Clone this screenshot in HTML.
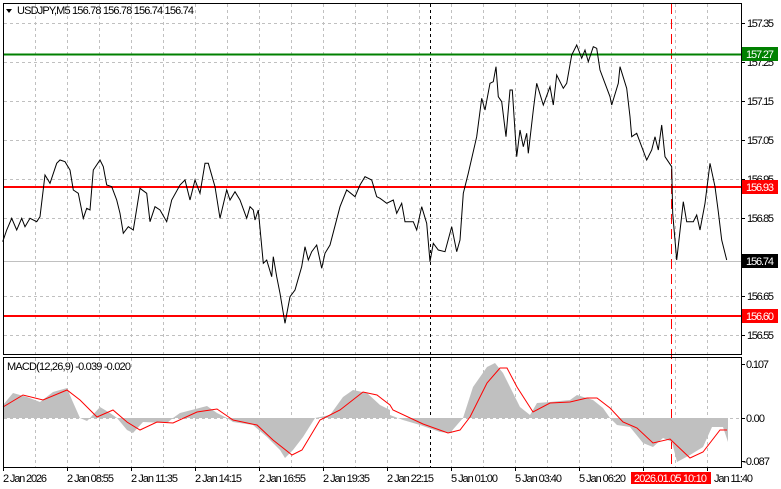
<!DOCTYPE html>
<html><head><style>
html,body{margin:0;padding:0;background:#fff;}
svg{display:block;}
text{font-family:"Liberation Sans","DejaVu Sans",sans-serif;font-size:11px;fill:#000;}
</style></head><body>
<svg width="781" height="489" viewBox="0 0 781 489" xmlns="http://www.w3.org/2000/svg">
<rect width="781" height="489" fill="#fff"/>
<g stroke="#c0c0c0" stroke-width="1" stroke-dasharray="3,3" shape-rendering="crispEdges">
<path d="M35.5 4V354M67.5 4V354M99.5 4V354M131.5 4V354M163.5 4V354M195.5 4V354M227.5 4V354M259.5 4V354M291.5 4V354M323.5 4V354M355.5 4V354M387.5 4V354M419.5 4V354M451.5 4V354M483.5 4V354M515.5 4V354M547.5 4V354M579.5 4V354M611.5 4V354M643.5 4V354M675.5 4V354M707.5 4V354"/>
<path d="M35.5 358V467M67.5 358V467M99.5 358V467M131.5 358V467M163.5 358V467M195.5 358V467M227.5 358V467M259.5 358V467M291.5 358V467M323.5 358V467M355.5 358V467M387.5 358V467M419.5 358V467M451.5 358V467M483.5 358V467M515.5 358V467M547.5 358V467M579.5 358V467M611.5 358V467M643.5 358V467M675.5 358V467M707.5 358V467"/>
<path d="M4 23.5H741M4 62.5H741M4 101.5H741M4 140.5H741M4 179.5H741M4 218.5H741M4 296.5H741M4 335.5H741"/>
<path d="M4 418.5H741"/>
</g>
<line x1="4" y1="261.5" x2="741" y2="261.5" stroke="#c0c0c0"/>
<line x1="430.5" y1="4" x2="430.5" y2="467" stroke="#000" stroke-dasharray="3,3"/>
<line x1="671.5" y1="4" x2="671.5" y2="467" stroke="#f00" stroke-dasharray="10,5"/>
<line x1="4" y1="54.5" x2="741" y2="54.5" stroke="#008000" stroke-width="2"/>
<line x1="4" y1="187" x2="741" y2="187" stroke="#f00" stroke-width="2"/>
<line x1="4" y1="316" x2="741" y2="316" stroke="#f00" stroke-width="2"/>
<polyline fill="none" stroke="#000" stroke-width="1" points="2.7,241.7 6.7,230 11.7,218.3 16.7,230 21.7,218.3 25,226.7 30,218.3 36.7,221.7 40,216.7 45,175 50,183.3 56.7,163.3 60,160 65,161.7 70,170 73.3,190 78.3,193.3 83.3,218.3 86.7,208.3 90,210 93.3,170 100,160 103.3,166.7 106.7,185 111.7,186.7 116.7,200 120,213.3 123.3,233.3 128.3,226.7 133.3,230 140,188.3 146.7,193.3 150,221.7 155,206.7 160,210 166.7,221.7 171.7,200 180,185 185,180 190,200 195,180 200,193.3 205,163.3 208.3,163.3 215,186.7 220,218.3 226.7,190 230,200 235,191.7 240,200 246.7,218.3 250,206.7 253.3,210 255,220 258.3,210 263.3,263.3 266.7,260 271.7,276.7 273.3,256.7 276.7,276.7 280,293.3 285,323.3 290,296.7 295,290 301.7,266.7 305,246.7 308.3,260 311.7,251.7 316.7,245 321.7,268.3 325,253.3 330,245 340,206.7 346.7,190 355,196.7 360,185 365,176.7 371.7,180 376.7,196.7 380,198.3 386.7,203.3 393.3,200 396.7,213.3 401.7,203.3 405,221.7 413.3,221.7 416.7,230 421.7,206.7 426.7,223.3 430,261.7 433.3,243.3 438.3,250 445,251.7 451.7,226.7 456.7,251.7 460,240 463.3,193.3 468.3,173.3 476.7,136.7 481.7,98.3 485,110 490,83.3 493.3,81.7 496,66.7 498.3,96.7 501.7,101.7 506,136.7 510,90 512.3,90 516.7,156.7 520,130 523.3,146.7 526.7,133.3 528.3,153.3 533.3,110 536.7,83.3 543.3,105 550,86.7 553.3,105 556.7,75 563.3,88.3 566.7,83.3 571.7,55 576.7,45 581.7,58.3 585,50 588.3,61.7 593.3,46.7 596.7,48.3 600,70 610,96.7 611.7,105 618.3,83.3 620,66.7 626.7,88.3 630,116.7 631.7,136.7 636.7,133.3 646.7,160 651.7,150 655,136.7 658.3,150 661.7,125 665,156.7 671.7,166.7 672.7,213.3 676.7,260 683.3,201.7 686.7,221.7 693.3,221.7 696.7,215 700,230 705,203.3 710,163.3 715,186.7 718.3,211.7 721.7,240 726.7,260"/>
<polygon fill="#c0c0c0" points="3,418 3,405 13,393 27,397 40,402 53,392 67,388 72,400 80,418 87,421 90,418 100,407 110,413 117,418 127,430 133,433 143,422 167,423 173,418 180,413 207,406 217,413 227,418 233,422 253,425 267,437 280,450 285,458 293,450 303,437 315,418 330,415 343,397 353,390 367,393 380,405 390,410 390,415 403,420 420,425 440,432 450,433 463,418 473,387 487,367 495,363 503,373 510,387 520,407 530,415 537,403 550,402 570,400 577,395 593,400 603,408 610,418 617,425 630,427 643,443 653,447 663,438 672,442 677,462 690,455 703,447 712,427 723,427 728,442 728,418"/>
<polyline fill="none" stroke="#f00" stroke-width="1" points="3,407 23,395 43,400 67,390 80,400 97,417 113,410 127,422 140,430 157,422 173,423 197,412 217,409 233,420 257,425 273,440 292,455 302,450 320,420 340,410 363,392 377,395 390,405 393,410 423,424 448,433 460,430 470,417 487,383 500,368 507,368 517,387 533,412 550,403 570,402 587,398 597,398 610,408 623,422 637,428 653,443 670,439 690,458 703,452 720,430 727,430"/>
<g fill="none" stroke="#000" stroke-width="1" shape-rendering="crispEdges">
<rect x="3.5" y="3.5" width="738" height="351"/>
<rect x="3.5" y="357.5" width="738" height="110"/>
</g>
<g stroke="#000" shape-rendering="crispEdges"><path d="M741 23.5h4M741 62.5h4M741 101.5h4M741 140.5h4M741 179.5h4M741 218.5h4M741 257.5h4M741 296.5h4M741 335.5h4M741 364.5h4M741 418.5h4M741 461.5h4"/></g>
<polygon points="6,9 12,9 9,13" fill="#000"/>
<text x="17" y="14" textLength="177">USDJPY,M5  156.78 156.78 156.74 156.74</text>
<text x="7" y="370" textLength="124">MACD(12,26,9) -0.039 -0.020</text>
<g>
<text x="747" y="27" textLength="27">157.35</text>
<text x="747" y="66" textLength="27">157.25</text>
<text x="747" y="105" textLength="27">157.15</text>
<text x="747" y="144" textLength="27">157.05</text>
<text x="747" y="183" textLength="27">156.95</text>
<text x="747" y="222" textLength="27">156.85</text>
<text x="747" y="300" textLength="27">156.65</text>
<text x="747" y="339" textLength="27">156.55</text>
</g>
<rect x="742" y="47" width="36" height="14" fill="#008000"/><text x="746" y="58" textLength="28" style="fill:#fff">157.27</text>
<rect x="742" y="180" width="36" height="14" fill="#f00"/><text x="746" y="191" textLength="28" style="fill:#fff">156.93</text>
<rect x="742" y="254" width="36" height="14" fill="#000"/><text x="746" y="265" textLength="28" style="fill:#fff">156.74</text>
<rect x="742" y="309" width="36" height="14" fill="#f00"/><text x="746" y="320" textLength="28" style="fill:#fff">156.60</text>
<text x="746" y="368" textLength="23">0.107</text>
<text x="746" y="422" textLength="19">0.00</text>
<text x="743" y="465" textLength="27">-0.087</text>
<g stroke="#000" shape-rendering="crispEdges"><path d="M3.5 467v4M67.5 467v4M131.5 467v4M195.5 467v4M259.5 467v4M323.5 467v4M387.5 467v4M451.5 467v4M515.5 467v4M579.5 467v4M643.5 467v4M707.5 467v4"/></g>
<text x="3" y="482" textLength="44">2 Jan 2026</text>
<text x="67" y="482" textLength="47">2 Jan 08:55</text>
<text x="131" y="482" textLength="47">2 Jan 11:35</text>
<text x="195" y="482" textLength="47">2 Jan 14:15</text>
<text x="259" y="482" textLength="47">2 Jan 16:55</text>
<text x="323" y="482" textLength="47">2 Jan 19:35</text>
<text x="387" y="482" textLength="47">2 Jan 22:15</text>
<text x="451" y="482" textLength="47">5 Jan 01:00</text>
<text x="515" y="482" textLength="47">5 Jan 03:40</text>
<text x="579" y="482" textLength="47">5 Jan 06:20</text>
<text x="714" y="482" textLength="39">Jan 11:40</text>
<rect x="631" y="472" width="80" height="12" fill="#f00"/>
<text x="634" y="482" textLength="73" style="fill:#fff">2026.01.05 10:10</text>
</svg>
</body></html>
